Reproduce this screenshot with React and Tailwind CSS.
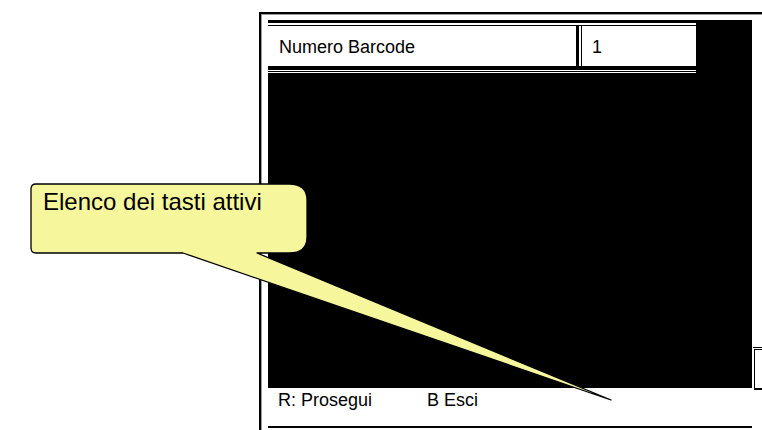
export default function App() {
  return (
    <div
      className="relative w-[762px] h-[430px] overflow-hidden bg-white text-black"
      style={{ fontFamily: '"Liberation Sans", Arial, sans-serif' }}
    >
      <div className="flex pl-[259px] pt-[12px] h-full">
        <div className="w-[540px] shrink-0 h-full border-l-2 border-t-2 border-black">
          <div className="h-full border-l border-t border-[#9a9a9a] pl-[6px] pt-[5px] flex">
            {/* main column */}
            <div className="w-[484px] shrink-0 flex flex-col">
              <div className="flex h-[53px]">
                <div className="w-[428px] flex flex-col">
                  <div className="h-[3px] bg-black" />
                  <div className="h-[2px]" />
                  <div className="h-[1px] bg-black" />
                  <div className="flex h-[40px]">
                    <div className="w-[308px] flex items-center pl-[11px] pt-[3px] text-[18px] leading-normal">
                      Numero Barcode
                    </div>
                    <div className="w-[3px] bg-black" />
                    <div className="w-[2px]" />
                    <div className="w-[1px] bg-black" />
                    <div className="flex-1 flex items-center pl-[10px] pt-[3px] text-[18px] leading-normal">
                      1
                    </div>
                  </div>
                  <div className="h-[4px] bg-black" />
                  <div className="h-[1px]" />
                  <div className="h-[1px] bg-black" />
                  <div className="h-[1px]" />
                </div>
                <div className="flex-1 bg-black" />
              </div>
              <div className="h-[315px] bg-black" />
              <div className="h-[38px] flex items-start pl-[10px] pt-[2px] text-[18px] leading-[20px]">
                <span className="w-[149px]">R: Prosegui</span>
                <span>B Esci</span>
              </div>
              <div className="h-[2px] bg-black" />
            </div>
            {/* right peeking cell */}
            <div className="flex-1 flex flex-col pl-[1px]">
              <div className="h-[327px]" />
              <div className="h-[1px] bg-black" />
              <div className="h-[1px]" />
              <div className="h-[41px] ml-[1px] border-l border-t border-b-2 border-black" />
            </div>
          </div>
        </div>
      </div>

      {/* callout overlay */}
      <svg
        className="absolute left-0 top-0 pointer-events-none"
        width="762"
        height="430"
        viewBox="0 0 762 430"
      >
        <path
          d="M 36 184 H 289 Q 307 184 307 200 V 237 Q 307 253 289 253 H 257 L 611 400 L 183 253 H 36 Q 31 253 31 248 V 189 Q 31 184 36 184 Z"
          fill="#f6f69c"
          stroke="#000"
          strokeWidth="1.3"
          strokeLinejoin="round"
        />
      </svg>
      <div className="absolute left-[43px] top-[190px] text-[24px] leading-[23px] whitespace-nowrap">
        Elenco dei tasti attivi
      </div>
    </div>
  );
}
